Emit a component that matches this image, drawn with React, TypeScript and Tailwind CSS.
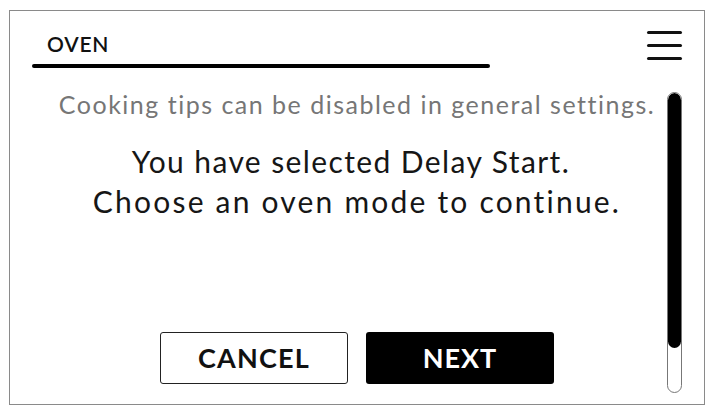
import React from 'react';

const Hamburger: React.FC = () => (
  <div className="flex flex-col gap-[10px] w-[35px] mt-[20px] mr-[22px]">
    <span className="block h-[3px] rounded-full bg-[#111]"></span>
    <span className="block h-[3px] rounded-full bg-[#111]"></span>
    <span className="block h-[3px] rounded-full bg-[#111]"></span>
  </div>
);

const ScrollBar: React.FC = () => (
  <div className="w-[15px] h-[301px] mt-[24px] mr-[22px] rounded-full border border-[#777] bg-white overflow-hidden">
    <div className="h-[255px] rounded-full bg-black"></div>
  </div>
);

export default function App() {
  return (
    <div className="w-[713px] h-[413px] bg-white pt-[10px] pl-[9px] pr-[8px] pb-[8px] font-['Lato',sans-serif]">
      <div className="h-full border border-[#8a8a8a] flex flex-col">
        {/* Header */}
        <header className="flex items-start">
          <div className="pl-[22px] pt-[23px]">
            <h1 className="pl-[15px] text-[21px] leading-[20px] font-semibold text-[#111] tracking-[0.8px]">OVEN</h1>
            <div className="mt-[10px] w-[458px] h-[4px] rounded-full bg-black"></div>
          </div>
          <div className="ml-auto">
            <Hamburger />
          </div>
        </header>

        {/* Body */}
        <div className="flex flex-1">
          <div className="flex-1 flex flex-col items-center pl-[37px] pt-[21px]">
            <p className="text-[25px] leading-[30px] text-[#767676] tracking-[1.5px] whitespace-nowrap">
              Cooking tips can be disabled in general settings.
            </p>
            <div className="mt-[22px] text-center text-[30px] leading-[40px] text-[#161616] whitespace-nowrap">
              <p className="tracking-[1.4px] pr-[12px]">You have selected Delay Start.</p>
              <p className="tracking-[2.2px]">Choose an oven mode to continue.</p>
            </div>
            <div className="mt-auto mb-[20px] flex gap-[18px]">
              <button className="w-[188px] h-[52px] rounded-[3px] border-[1.5px] border-[#222] bg-white text-[27px] font-bold text-[#111] tracking-[1.2px]">
                CANCEL
              </button>
              <button className="w-[188px] h-[52px] rounded-[3px] bg-black text-[27px] font-bold text-white tracking-[1px]">
                NEXT
              </button>
            </div>
          </div>
          <ScrollBar />
        </div>
      </div>
    </div>
  );
}
